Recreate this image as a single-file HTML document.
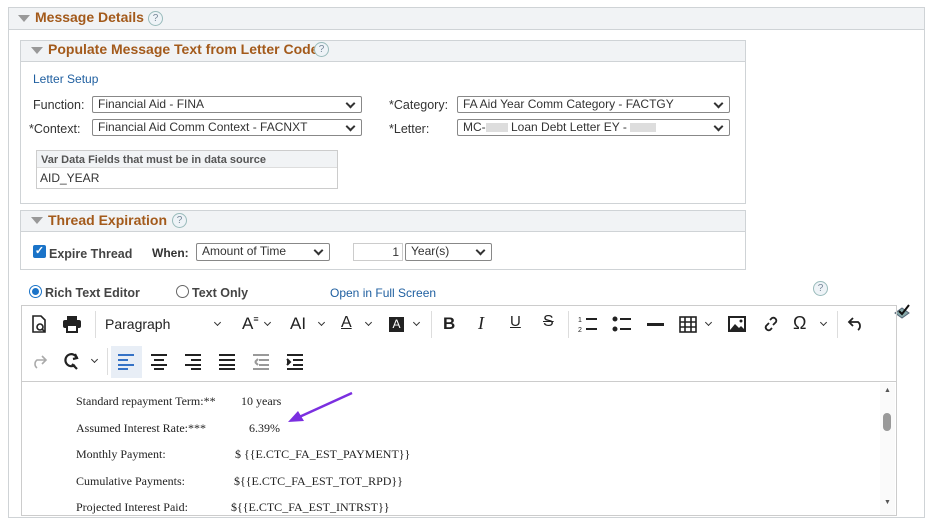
<!DOCTYPE html>
<html><head><meta charset="utf-8"><style>
*{box-sizing:border-box;margin:0;padding:0}
body{width:936px;height:525px;background:#fff;font-family:"Liberation Sans",sans-serif;font-size:12px;color:#333;position:relative;overflow:hidden}
.a{position:absolute}
.hdr{background:#f1f3f5;border:1px solid #cfd3d6}
.ttl{color:#a35a1b;font-weight:bold;font-size:14px}
.tri{width:0;height:0;border-left:6px solid transparent;border-right:6px solid transparent;border-top:7px solid #999}
.help{width:15px;height:15px;border-radius:50%;border:1px solid #9bb;background:#eef3f7;color:#789;font-size:10px;text-align:center;line-height:13px}
.sel{border:1px solid #888;border-radius:2px;background:#fff;font-size:12px;padding-left:5px;line-height:15px;color:#333}
.sel:after{content:"";position:absolute;right:7px;top:3px;width:5px;height:5px;border-right:2px solid #333;border-bottom:2px solid #333;transform:rotate(45deg)}
.lbl{font-size:12.5px;color:#333}
.tb{font-size:15px;color:#222}
.chv{position:absolute;width:5px;height:5px;border-right:1.5px solid #333;border-bottom:1.5px solid #333;transform:rotate(45deg)}
.ser{font-family:"Liberation Serif",serif;font-size:12px;color:#222}
</style></head><body>
<!-- outer -->
<div class="a" style="left:8px;top:7px;width:917px;height:511px;border:1px solid #cfd3d6"></div>
<div class="a hdr" style="left:8px;top:7px;width:917px;height:23px"></div>
<div class="a tri" style="left:18px;top:15px"></div>
<div class="a ttl" style="left:35px;top:9px">Message Details</div>
<div class="a help" style="left:148px;top:11px">?</div>

<!-- populate -->
<div class="a" style="left:20px;top:40px;width:726px;height:164px;border:1px solid #cfd3d6"></div>
<div class="a hdr" style="left:20px;top:40px;width:726px;height:22px"></div>
<div class="a tri" style="left:31px;top:47px"></div>
<div class="a ttl" style="left:48px;top:41px">Populate Message Text from Letter Code</div>
<div class="a help" style="left:314px;top:42px">?</div>
<div class="a" style="left:33px;top:72px;color:#1f5fa0">Letter Setup</div>
<div class="a lbl" style="left:33px;top:98px">Function:</div>
<div class="a sel" style="left:92px;top:96px;width:270px;height:17px">Financial Aid - FINA</div>
<div class="a lbl" style="left:29px;top:122px">*Context:</div>
<div class="a sel" style="left:92px;top:119px;width:270px;height:17px">Financial Aid Comm Context - FACNXT</div>
<div class="a lbl" style="left:389px;top:98px">*Category:</div>
<div class="a sel" style="left:457px;top:96px;width:273px;height:17px">FA Aid Year Comm Category - FACTGY</div>
<div class="a lbl" style="left:389px;top:122px">*Letter:</div>
<div class="a sel" style="left:457px;top:119px;width:273px;height:17px">MC-<span style="display:inline-block;width:22px;height:9px;background:#ddd;vertical-align:middle"></span> Loan Debt Letter EY - <span style="display:inline-block;width:26px;height:9px;background:#ddd;vertical-align:middle"></span></div>
<div class="a" style="left:36px;top:150px;width:302px;height:39px;border:1px solid #ccc"></div>
<div class="a" style="left:37px;top:151px;width:300px;height:17px;background:#f1f3f5;border-bottom:1px solid #ddd;font-size:11px;font-weight:bold;color:#555;padding:3px 4px">Var Data Fields that must be in data source</div>
<div class="a" style="left:40px;top:171px;font-size:12px">AID_YEAR</div>

<!-- thread -->
<div class="a" style="left:20px;top:210px;width:726px;height:60px;border:1px solid #cfd3d6"></div>
<div class="a hdr" style="left:20px;top:210px;width:726px;height:22px"></div>
<div class="a tri" style="left:31px;top:217px"></div>
<div class="a ttl" style="left:48px;top:212px">Thread Expiration</div>
<div class="a help" style="left:172px;top:213px">?</div>
<div class="a" style="left:33px;top:245px;width:13px;height:13px;background:#1a73c8;border-radius:2px;color:#fff;font-size:11px;line-height:13px;text-align:center;font-weight:bold">✓</div>
<div class="a lbl" style="left:49px;top:247px;font-weight:bold;color:#444">Expire Thread</div>
<div class="a lbl" style="left:152px;top:246px;font-weight:bold;font-size:12px">When:</div>
<div class="a sel" style="left:196px;top:243px;width:134px;height:18px">Amount of Time</div>
<div class="a" style="left:353px;top:243px;width:50px;height:18px;border:1px solid #ccc;text-align:right;padding-right:3px;line-height:16px">1</div>
<div class="a sel" style="left:405px;top:243px;width:87px;height:18px">Year(s)</div>

<!-- radios -->
<div class="a" style="left:29px;top:285px;width:13px;height:13px;border-radius:50%;border:1px solid #1a73c8;background:#fff"><div style="margin:2px;width:7px;height:7px;border-radius:50%;background:#1a73c8"></div></div>
<div class="a lbl" style="left:45px;top:286px;font-weight:bold;color:#444">Rich Text Editor</div>
<div class="a" style="left:176px;top:285px;width:13px;height:13px;border-radius:50%;border:1px solid #666"></div>
<div class="a lbl" style="left:192px;top:286px;font-weight:bold;color:#444">Text Only</div>
<div class="a" style="left:330px;top:286px;color:#1f5fa0">Open in Full Screen</div>
<div class="a help" style="left:813px;top:281px">?</div>
<svg class="a" style="left:893px;top:303px" width="18" height="16" viewBox="0 0 18 16"><path d="M2 10l7-5 7 5-7 5z" fill="#8aa" stroke="#567"/><path d="M6 8l3 3 7-9" fill="none" stroke="#111" stroke-width="2"/></svg>

<!-- editor -->
<div class="a" style="left:21px;top:305px;width:876px;height:211px;border:1px solid #ccc"></div>
<div class="a" style="left:22px;top:381px;width:874px;height:1px;background:#ccc"></div>
<div class="a" style="left:95px;top:311px;width:1px;height:27px;background:#ddd"></div>
<div class="a" style="left:431px;top:311px;width:1px;height:27px;background:#ddd"></div>
<div class="a" style="left:568px;top:311px;width:1px;height:27px;background:#ddd"></div>
<div class="a" style="left:837px;top:311px;width:1px;height:27px;background:#ddd"></div>
<div class="a" style="left:107px;top:348px;width:1px;height:27px;background:#ddd"></div>
<svg class="a" style="left:30px;top:314px" width="20" height="20" viewBox="0 0 20 20" fill="none" stroke="#222" stroke-width="1.6"><path d="M3 2h8l4 4v12H3z"/><circle cx="10" cy="13" r="3"/><path d="M12 15l3 3"/></svg>
<svg class="a" style="left:62px;top:314px" width="20" height="20" viewBox="0 0 20 20" fill="#222"><rect x="5" y="2" width="10" height="4"/><rect x="1" y="6" width="18" height="8" rx="2"/><rect x="5" y="11" width="10" height="7" fill="#fff" stroke="#222" stroke-width="2"/></svg>
<div class="a tb" style="left:105px;top:316px;font-size:14px">Paragraph</div>
<div class="chv" style="left:215px;top:320px"></div>
<div class="a tb" style="left:242px;top:314px;font-size:17px">A<span style="font-size:9px;vertical-align:top">≡</span></div><div class="chv" style="left:265px;top:320px"></div>
<div class="a tb" style="left:290px;top:314px;font-size:17px">AI</div><div class="chv" style="left:319px;top:320px"></div>
<div class="a tb" style="left:341px;top:314px;font-size:16px;text-decoration:underline">A</div><div class="chv" style="left:366px;top:320px"></div>
<div class="a" style="left:389px;top:317px;width:15px;height:15px;background:#222;color:#fff;font-size:12px;text-align:center;line-height:15px">A</div><div class="chv" style="left:414px;top:320px"></div>
<div class="a tb" style="left:443px;top:314px;font-size:17px;font-weight:bold">B</div>
<div class="a tb" style="left:478px;top:313px;font-size:18px;font-family:'Liberation Serif',serif;font-style:italic">I</div>
<div class="a tb" style="left:510px;top:313px;font-size:15px;text-decoration:underline">U</div>
<div class="a tb" style="left:543px;top:313px;font-size:16px;text-decoration:line-through">S</div>
<svg class="a" style="left:578px;top:315px" width="20" height="18" viewBox="0 0 20 18" stroke="#222" stroke-width="2"><path d="M8 4h11M8 14h11"/><text x="0" y="7" font-size="7" stroke="none" fill="#222">1</text><text x="0" y="17" font-size="7" stroke="none" fill="#222">2</text></svg>
<svg class="a" style="left:612px;top:315px" width="20" height="18" viewBox="0 0 20 18" stroke="#222" stroke-width="2"><path d="M8 4h11M8 14h11"/><circle cx="3" cy="4" r="1.5" fill="#222"/><circle cx="3" cy="14" r="1.5" fill="#222"/></svg>
<div class="a" style="left:647px;top:323px;width:17px;height:3px;background:#222"></div>
<svg class="a" style="left:679px;top:316px" width="18" height="17" viewBox="0 0 18 17" fill="none" stroke="#222" stroke-width="1.6"><rect x="1" y="1" width="16" height="15"/><path d="M1 6h16M1 11h16M6 1v15M12 1v15"/></svg><div class="chv" style="left:706px;top:320px"></div>
<svg class="a" style="left:728px;top:316px" width="18" height="16" viewBox="0 0 18 16"><rect x="1" y="1" width="16" height="14" fill="none" stroke="#222" stroke-width="2"/><path d="M2 14l5-6 4 4 2-2 4 4z" fill="#222"/><circle cx="13" cy="5" r="1.5" fill="#222"/></svg>
<svg class="a" style="left:762px;top:315px" width="18" height="18" viewBox="0 0 18 18" fill="none" stroke="#222" stroke-width="1.8"><path d="M8 5l2-2a3 3 0 014 4l-3 3M10 13l-2 2a3 3 0 01-4-4l3-3"/></svg>
<div class="a tb" style="left:793px;top:313px;font-size:18px">Ω</div><div class="chv" style="left:821px;top:320px"></div>
<svg class="a" style="left:847px;top:317px" width="18" height="14" viewBox="0 0 18 14" fill="none" stroke="#222" stroke-width="1.8"><path d="M6 1L2 5l4 4M2 5h9a5 5 0 010 8"/></svg>
<svg class="a" style="left:30px;top:355px" width="18" height="14" viewBox="0 0 18 14" fill="none" stroke="#aaa" stroke-width="1.6"><path d="M12 1l4 4-4 4M16 5H7a5 5 0 000 8"/></svg>
<svg class="a" style="left:62px;top:352px" width="20" height="20" viewBox="0 0 20 20" fill="none" stroke="#222" stroke-width="2.2"><path d="M15 6a6 6 0 10-2 7"/><path d="M10 12l5 5"/><path d="M13 2l2 4-4 1"/></svg>
<div class="chv" style="left:92px;top:357px"></div>
<div class="a" style="left:111px;top:346px;width:31px;height:32px;background:#e8eef6"></div>
<svg class="a" style="left:117px;top:354px" width="190" height="16" viewBox="0 0 190 16" stroke-width="2"><g stroke="#3572c6"><path d="M1 1h16M1 6h10M1 11h16M1 15h10"/></g><g stroke="#222"><path d="M34 1h16M37 6h10M34 11h16M37 15h10M68 1h16M74 6h10M68 11h16M74 15h10M102 1h16M102 6h16M102 11h16M102 15h16"/></g><g stroke="#999"><path d="M136 1h16M142 6h10M142 11h10M136 15h16M138 8l3-3M138 8l3 3"/></g><g stroke="#222"><path d="M170 1h16M176 6h10M176 11h10M170 15h16"/><path d="M170 5l3 3-3 3" fill="#222"/></g></svg>
<!-- content -->
<div class="a ser" style="left:76px;top:394px">Standard repayment Term:**</div><div class="a ser" style="left:241px;top:394px">10 years</div>
<div class="a ser" style="left:76px;top:421px">Assumed Interest Rate:***</div><div class="a ser" style="left:249px;top:421px">6.39%</div>
<div class="a ser" style="left:76px;top:447px">Monthly Payment:</div><div class="a ser" style="left:235px;top:447px">$ {{E.CTC_FA_EST_PAYMENT}}</div>
<div class="a ser" style="left:76px;top:474px">Cumulative Payments:</div><div class="a ser" style="left:234px;top:474px">${{E.CTC_FA_EST_TOT_RPD}}</div>
<div class="a ser" style="left:76px;top:500px">Projected Interest Paid:</div><div class="a ser" style="left:231px;top:500px">${{E.CTC_FA_EST_INTRST}}</div>
<svg class="a" style="left:285px;top:390px" width="70" height="35" viewBox="0 0 70 35"><path d="M67 3L12 28" stroke="#7b2fe0" stroke-width="2.5"/><path d="M3 32l16-1-6-10z" fill="#7b2fe0"/></svg>
<!-- scrollbar -->
<div class="a" style="left:880px;top:383px;width:15px;height:132px;background:#fafafa"></div>
<div class="a" style="left:884px;top:387px;font-size:7px;color:#555">▲</div>
<div class="a" style="left:883px;top:413px;width:8px;height:18px;border-radius:4px;background:#999"></div>
<div class="a" style="left:884px;top:499px;font-size:7px;color:#555">▼</div>
</body></html>
